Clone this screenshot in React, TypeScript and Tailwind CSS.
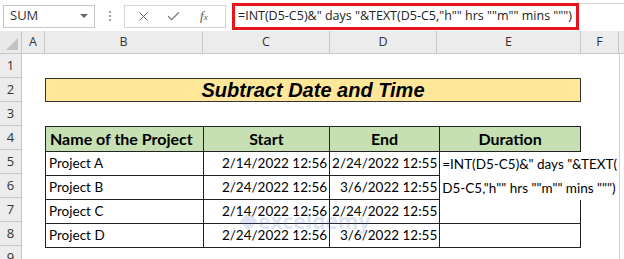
import { X, Check } from 'lucide-react';

const cols = ['A', 'B', 'C', 'D', 'E', 'F'];

const rows = [
  { name: 'Project A', start: '2/14/2022 12:56', end: '2/24/2022 12:55' },
  { name: 'Project B', start: '2/24/2022 12:56', end: '3/6/2022 12:55' },
  { name: 'Project C', start: '2/14/2022 12:56', end: '2/24/2022 12:55' },
  { name: 'Project D', start: '2/24/2022 12:56', end: '3/6/2022 12:55' },
];

const FormulaBar = () => (
  <div className="flex h-[31px] items-center bg-white pt-[3px] pb-[2px] font-['Open_Sans',sans-serif]">
    {/* Name box */}
    <div className="ml-[3px] flex h-[23px] w-[92px] items-center justify-between border border-[#c6c6c6] pl-[6px] pr-[6px] text-[13px] text-[#333]">
      <span>SUM</span>
      <span className="h-0 w-0 border-x-[4px] border-t-[4px] border-x-transparent border-t-[#666]" />
    </div>
    {/* Dots */}
    <div className="ml-[13px] flex w-[4px] flex-col items-center gap-[2px]">
      <span className="h-[2px] w-[2px] bg-[#a0a0a0]" />
      <span className="h-[2px] w-[2px] bg-[#a0a0a0]" />
      <span className="h-[2px] w-[2px] bg-[#a0a0a0]" />
    </div>
    {/* Cancel / enter / fx */}
    <div className="ml-[12px] flex h-[23px] w-[102px] items-center border border-[#d4d4d4] text-[#666]">
      <X size={15} strokeWidth={1.6} className="ml-[11px]" />
      <Check size={15} strokeWidth={2} className="ml-[15px] text-[#777]" />
      <span className="ml-[19px] font-['Liberation_Serif',serif] text-[13px] italic text-[#555]">
        f<span className="text-[9px]">x</span>
      </span>
    </div>
    {/* Formula input */}
    <div className="ml-[6px] flex h-[26px] flex-1 border-t border-[#d4d4d4]">
      <div className="-mt-[1px] flex h-[27px] w-[347px] items-center border-[3px] border-[#e8141b] pl-[3px] text-[12.5px] whitespace-nowrap text-[#222]">
        =INT(D5-C5)&amp;" days "&amp;TEXT(D5-C5,"h"" hrs ""m"" mins """)
      </div>
    </div>
  </div>
);

const App = () => {
  return (
    <div className="relative h-[259px] w-[624px] overflow-hidden bg-white font-['Lato',sans-serif]">
      <FormulaBar />
      <div className="grid grid-cols-[22px_23px_158px_127px_107px_144px_38px_5px] grid-rows-[23px_24px_24px_24px_24px_24px_24px_24px_24px_24px]">
        {/* Column headers */}
        <div className="relative border-r border-b border-[#c8c8c8] bg-[#e9e9e9]">
          <span className="absolute right-[3px] bottom-[3px] h-0 w-0 border-b-[12px] border-l-[12px] border-b-[#c2c2c2] border-l-transparent" />
        </div>
        {cols.map((c) => (
          <div
            key={c}
            className="flex items-center justify-center border-r border-b border-[#c8c8c8] bg-[#ececec] font-['Open_Sans',sans-serif] text-[12.5px] text-[#333]"
          >
            {c}
          </div>
        ))}
        <div className="border-b border-[#c8c8c8] bg-[#ececec]" />

        {/* Row headers + canvas */}
        {[1, 2, 3, 4, 5, 6, 7, 8, 9].map((r) => (
          <div
            key={r}
            style={{ gridRowStart: r + 1 }}
            className="col-start-1 flex items-center justify-center border-r border-b border-[#c8c8c8] bg-[#ececec] font-['Open_Sans',sans-serif] text-[13px] text-[#333]"
          >
            {r}
          </div>
        ))}
        <div className="col-start-8 row-span-9 row-start-2 border-l border-[#d0d0d0] bg-white" />

        {/* Title */}
        <div className="col-span-4 col-start-3 row-start-3 flex items-center justify-center border border-[#333] bg-[#ffe699] font-['Liberation_Sans',sans-serif] text-[20px] font-bold italic text-black">
          Subtract Date and Time
        </div>

        {/* Data table */}
        <div className="col-span-4 col-start-3 row-span-5 row-start-5">
          <table className="table-fixed border-collapse text-[13.5px] text-black">
            <colgroup>
              <col className="w-[158px]" />
              <col className="w-[127px]" />
              <col className="w-[107px]" />
              <col className="w-[144px]" />
            </colgroup>
            <thead>
              <tr className="h-[24px] bg-[#c6e0b4] text-[16px] font-bold">
                <th className="border border-[#222] px-[4px] py-0 text-left whitespace-nowrap">Name of the Project</th>
                <th className="border border-[#222] p-0 text-center">Start</th>
                <th className="border border-[#222] p-0 text-center">End</th>
                <th className="border border-[#222] p-0 text-center">Duration</th>
              </tr>
            </thead>
            <tbody>
              {rows.map((row, i) => (
                <tr key={row.name} className="h-[24px]">
                  <td className="border border-[#222] px-[3px] py-0">{row.name}</td>
                  <td className="border border-[#222] px-[2px] py-0 text-right whitespace-nowrap">{row.start}</td>
                  <td className="border border-[#222] px-[2px] py-0 text-right whitespace-nowrap">{row.end}</td>
                  {i === 0 && (
                    <td rowSpan={2} className="relative border-t border-l border-[#222] p-0 align-top">
                      <div className="absolute top-0 left-0 z-10 bg-white pl-[2px] leading-[24px] whitespace-nowrap">
                        <div>=INT(D5-C5)&amp;" days "&amp;TEXT(</div>
                        <div>D5-C5,"h"" hrs ""m"" mins """)</div>
                      </div>
                    </td>
                  )}
                  {i > 1 && <td className="border border-[#222] p-0" />}
                </tr>
              ))}
            </tbody>
          </table>
        </div>
      </div>
      {/* Watermark */}
      <div className="pointer-events-none absolute top-[211px] left-[242px] flex items-center gap-[3px] opacity-[0.18]">
        <span className="h-[13px] w-[13px] rotate-45 rounded-[2px] bg-[#4a6fc0]" />
        <span className="font-['Open_Sans',sans-serif] text-[21px] font-bold leading-none text-[#4a6fc0]">exceldemy</span>
      </div>
    </div>
  );
};

export default App;
